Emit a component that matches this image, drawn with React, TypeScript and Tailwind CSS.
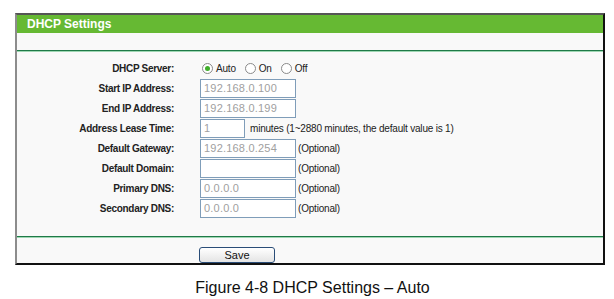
import React from 'react'

const font = { fontFamily: '"Liberation Sans", Arial, sans-serif' }

function Radio({ checked }: { checked?: boolean }) {
  return (
    <span className="inline-flex h-[11px] w-[11px] items-center justify-center rounded-full border border-[#8a8a8a] bg-white">
      {checked && <span className="h-[5px] w-[5px] rounded-full bg-[#3fae2a]" />}
    </span>
  )
}

function Field({ value, w = 'w-[96px]' }: { value: string; w?: string }) {
  return (
    <div className={`h-[19px] ${w} border border-[#7f9db9] bg-white px-[3px] text-[11px] leading-[17px] text-[#a0a0a0] tracking-[0.2px]`}>
      {value}
    </div>
  )
}

const rows: { label: string; value: string; note?: string; w?: string }[] = [
  { label: 'Start IP Address:', value: '192.168.0.100' },
  { label: 'End IP Address:', value: '192.168.0.199' },
  { label: 'Address Lease Time:', value: '1', w: 'w-[45px]', note: 'minutes (1~2880 minutes, the default value is 1)' },
  { label: 'Default Gateway:', value: '192.168.0.254', note: '(Optional)' },
  { label: 'Default Domain:', value: '', note: '(Optional)' },
  { label: 'Primary DNS:', value: '0.0.0.0', note: '(Optional)' },
  { label: 'Secondary DNS:', value: '0.0.0.0', note: '(Optional)' },
]

export default function App() {
  return (
    <div className="w-[614px] h-[299px] bg-white overflow-hidden pt-[13px]" style={font}>
      <div className="ml-[15px] w-[590px] border-t-2 border-t-[#555] border-l-2 border-l-[#8c8c8c] border-r-2 border-r-[#111] border-b-2 border-b-[#111] bg-[#f9f9f9]">
        {/* Header */}
        <div className="h-[18px] bg-[#66b933] pl-[10px] text-[12px] font-bold leading-[18px] text-white">DHCP Settings</div>
        <div className="h-[17px]" />
        <div className="h-[2px] border-t border-t-[#1f7a48] border-b border-b-[#9fd7b3]" />

        {/* Form */}
        <div className="pt-[6px] pb-[18px] text-[10px] text-[#222]">
          <div className="flex h-[20px] items-center">
            <div className="w-[157px] text-right font-bold tracking-[-0.3px]">DHCP Server:</div>
            <div className="ml-[28px] flex items-center gap-[3px] tracking-[-0.2px]">
              <Radio checked />
              <span className="mr-[6px]">Auto</span>
              <Radio />
              <span className="mr-[6px]">On</span>
              <Radio />
              <span>Off</span>
            </div>
          </div>
          {rows.map(r => (
            <div key={r.label} className="flex h-[20px] items-center">
              <div className="w-[157px] text-right font-bold tracking-[-0.3px]">{r.label}</div>
              <div className="ml-[26px]">
                <Field value={r.value} w={r.w} />
              </div>
              {r.note && <span className={`${r.w ? 'ml-[5px]' : 'ml-[2px]'} tracking-[-0.2px]`}>{r.note}</span>}
            </div>
          ))}
        </div>

        <div className="h-[2px] border-t border-t-[#1f7a48] border-b border-b-[#9fd7b3]" />

        {/* Save */}
        <div className="h-[25px] pl-[182px] pt-[4px]">
          <button className="h-[16px] w-[76px] rounded-[3px] border border-[#2a4d78] bg-gradient-to-b from-white to-[#e4e4e4] text-[11px] leading-[14px] text-[#111]">
            Save
          </button>
        </div>
      </div>

      <div className="mt-[11px] pl-[11px] text-center text-[16px] text-[#111]">Figure 4-8 DHCP Settings – Auto</div>
    </div>
  )
}
